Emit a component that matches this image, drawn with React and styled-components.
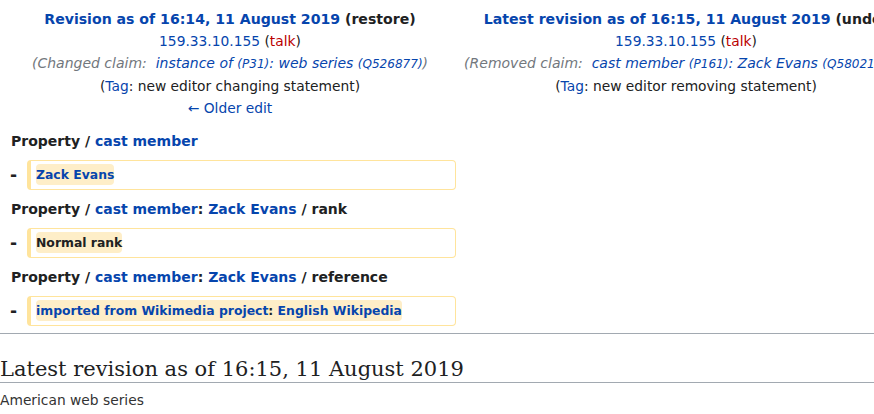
import React from 'react';
import styled, { createGlobalStyle } from 'styled-components';

const GlobalStyle = createGlobalStyle`
  html, body {
    margin: 0;
    padding: 0;
    background: #fff;
  }
  body {
    font-family: 'DejaVu Sans', sans-serif;
    color: #202122;
  }
`;

const Page = styled.div`
  width: 874px;
  height: 414px;
  overflow: hidden;
  font-size: 13.8px;
`;

const DiffTable = styled.table`
  width: 916px;
  table-layout: fixed;
  border-collapse: separate;
  border-spacing: 4px;
  margin: 0;
`;

const MarkerCol = styled.col`
  width: 19px;
`;

const ContentCol = styled.col`
  width: 429px;
`;

const TitleCell = styled.td`
  text-align: center;
  vertical-align: top;
  padding: 4px 0 3px;
  line-height: 22px;
  white-space: nowrap;
`;

const TitleLine = styled.div`
  font-weight: ${p => (p.$bold ? 'bold' : 'normal')};
  font-size: ${p => (p.$bold ? '14.1px' : 'inherit')};
`;

const Link = styled.a`
  color: ${p => (p.$new ? '#ba0000' : '#0645ad')};
  text-decoration: none;
`;

const Comment = styled.span`
  color: #72777d;
  font-style: italic;
  font-size: 14px;
`;

const ItemId = styled.span`
  font-size: 0.86em;
`;

const LineNo = styled.td`
  font-size: 14px;
  font-weight: bold;
  line-height: 21px;
  padding: 5px 0 4px 7px;
  white-space: nowrap;
`;

const Marker = styled.td`
  text-align: right;
  font-weight: bold;
  font-size: 17px;
  padding: 0 6px 0 0;
  vertical-align: middle;
`;

const DeletedLine = styled.td`
  border: 1px solid #ffe49c;
  border-left-width: 4px;
  border-radius: 4px;
  padding: 3px 5px 4px;
  line-height: 21px;
  font-size: 12.4px;
  font-weight: bold;
  white-space: nowrap;
`;

const Change = styled.del`
  text-decoration: none;
  background: #feeec8;
  border-radius: 4px;
  padding: 3px 0;
`;

const Divider = styled.div`
  margin-top: 3px;
  border-top: 1px solid #a2a9b1;
`;

const Heading = styled.h2`
  font-family: 'DejaVu Serif', serif;
  font-weight: normal;
  font-size: 21px;
  line-height: 26px;
  margin: 22px 0 0;
  padding: 0;
  border-bottom: 1px solid #a2a9b1;
  white-space: nowrap;
`;

const Description = styled.div`
  margin-top: 6px;
  line-height: 22px;
  color: #333;
`;

const rows = [
  {
    head: (
      <>
        Property / <Link href="#">cast member</Link>
      </>
    ),
    value: <Link href="#">Zack Evans</Link>,
  },
  {
    head: (
      <>
        Property / <Link href="#">cast member</Link>: <Link href="#">Zack Evans</Link> / rank
      </>
    ),
    value: 'Normal rank',
  },
  {
    head: (
      <>
        Property / <Link href="#">cast member</Link>: <Link href="#">Zack Evans</Link> / reference
      </>
    ),
    value: (
      <>
        <Link href="#">imported from Wikimedia project</Link>: <Link href="#">English Wikipedia</Link>
      </>
    ),
  },
];

export default function App() {
  return (
    <Page>
      <GlobalStyle />
      <DiffTable>
        <colgroup>
          <MarkerCol />
          <ContentCol />
          <MarkerCol />
          <ContentCol />
        </colgroup>
        <tbody>
          <tr>
            <TitleCell colSpan={2}>
              <TitleLine $bold>
                <Link href="#">Revision as of 16:14, 11 August 2019</Link> (restore)
              </TitleLine>
              <TitleLine>
                <Link href="#">159.33.10.155</Link> (<Link href="#" $new>talk</Link>)
              </TitleLine>
              <TitleLine>
                <Comment>
                  (Changed claim:{'\u00a0\u00a0'}
                  <Link href="#">
                    instance of <ItemId>(P31)</ItemId>: web series <ItemId>(Q526877)</ItemId>
                  </Link>
                  )
                </Comment>
              </TitleLine>
              <TitleLine>
                (<Link href="#">Tag</Link>: new editor changing statement)
              </TitleLine>
              <TitleLine>
                <Link href="#">← Older edit</Link>
              </TitleLine>
            </TitleCell>
            <TitleCell colSpan={2}>
              <TitleLine $bold>
                <Link href="#">Latest revision as of 16:15, 11 August 2019</Link> (undo)
              </TitleLine>
              <TitleLine>
                <Link href="#">159.33.10.155</Link> (<Link href="#" $new>talk</Link>)
              </TitleLine>
              <TitleLine>
                <Comment>
                  (Removed claim:{'\u00a0\u00a0'}
                  <Link href="#">
                    cast member <ItemId>(P161)</ItemId>: Zack Evans <ItemId>(Q58021346)</ItemId>
                  </Link>
                  )
                </Comment>
              </TitleLine>
              <TitleLine>
                (<Link href="#">Tag</Link>: new editor removing statement)
              </TitleLine>
            </TitleCell>
          </tr>
          {rows.map((row, i) => (
            <React.Fragment key={i}>
              <tr>
                <LineNo colSpan={2}>{row.head}</LineNo>
                <td colSpan={2} />
              </tr>
              <tr>
                <Marker>-</Marker>
                <DeletedLine>
                  <Change>{row.value}</Change>
                </DeletedLine>
                <td colSpan={2} />
              </tr>
            </React.Fragment>
          ))}
        </tbody>
      </DiffTable>
      <Divider />
      <Heading>Latest revision as of 16:15, 11 August 2019</Heading>
      <Description>American web series</Description>
    </Page>
  );
}
